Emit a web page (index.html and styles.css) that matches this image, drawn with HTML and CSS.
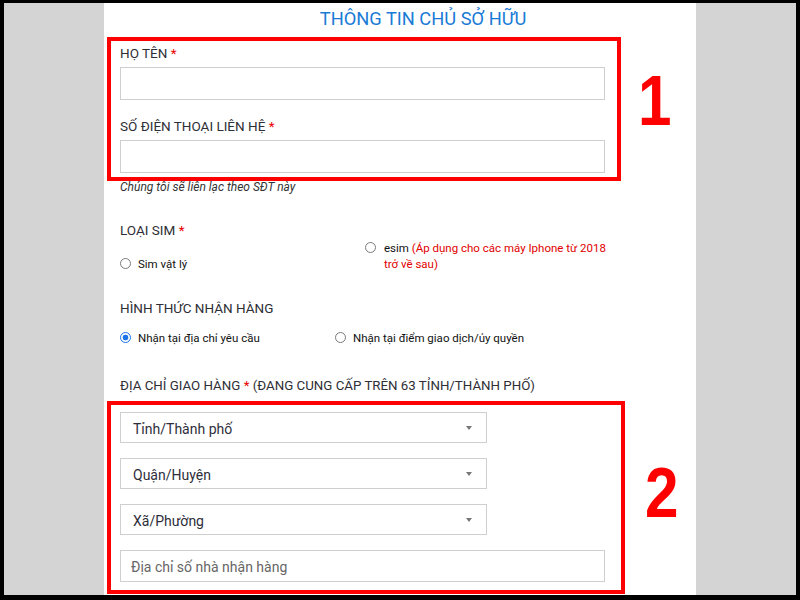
FILE: index.html
```html
<!DOCTYPE html>
<html lang="vi">
<head>
<meta charset="utf-8">
<title>Thông tin chủ sở hữu</title>
<link rel="stylesheet" href="styles.css">
</head>
<body>
<div class="screen">
  <div class="side"></div>
  <main class="panel">
    <h1 class="title">THÔNG TIN CHỦ SỞ HỮU</h1>

    <div class="box box-1">
      <div class="field">
        <div class="label">HỌ TÊN <span class="req">*</span></div>
        <input class="input" type="text">
      </div>
      <div class="field field-2">
        <div class="label">SỐ ĐIỆN THOẠI LIÊN HỆ <span class="req">*</span></div>
        <input class="input" type="text">
      </div>
    </div>
    <p class="hint pad">Chúng tôi sẽ liên lạc theo SĐT này</p>

    <div class="group group-sim pad">
      <div class="label">LOẠI SIM <span class="req">*</span></div>
      <div class="radios radios-sim">
        <div class="radio col-a"><span class="dot"></span><span class="rtext">Sim vật lý</span></div>
        <div class="radio col-b"><span class="dot"></span><p class="rtext">esim <span class="red">(Áp dụng cho các máy Iphone từ 2018 trở về sau)</span></p></div>
      </div>
    </div>

    <div class="group group-ship pad">
      <div class="label">HÌNH THỨC NHẬN HÀNG</div>
      <div class="radios radios-ship">
        <div class="radio col-c"><span class="dot on"></span><span class="rtext">Nhận tại địa chỉ yêu cầu</span></div>
        <div class="radio"><span class="dot"></span><span class="rtext">Nhận tại điểm giao dịch/ủy quyền</span></div>
      </div>
    </div>

    <div class="group group-addr pad">
      <div class="label label-addr">ĐỊA CHỈ GIAO HÀNG <span class="req">*</span> (ĐANG CUNG CẤP TRÊN 63 TỈNH/THÀNH PHỐ)</div>
    </div>

    <div class="box box-2">
      <div class="select"><span>Tỉnh/Thành phố</span><span class="caret"></span></div>
      <div class="select"><span>Quận/Huyện</span><span class="caret"></span></div>
      <div class="select"><span>Xã/Phường</span><span class="caret"></span></div>
      <input class="input input-addr" type="text" placeholder="Địa chỉ số nhà nhận hàng">
    </div>

    <span class="anno anno-1">1</span>
    <span class="anno anno-2">2</span>
  </main>
  <div class="side"></div>
</div>
</body>
</html>
```

FILE: styles.css
```css
* {
  box-sizing: border-box;
}

html,
body {
  margin: 0;
  padding: 0;
  background: #000;
}

body {
  font-family: Roboto, "Noto Sans", "Liberation Sans", sans-serif;
  color: #333;
}

.screen {
  width: 800px;
  height: 600px;
  border-style: solid;
  border-color: #000;
  border-width: 3px 4px 5px 4px;
  display: flex;
  overflow: hidden;
  background: #000;
}

.side {
  width: 100px;
  background: #d4d4d4;
}

.panel {
  position: relative;
  width: 592px;
  background: #fff;
  padding: 4px 0 0 3px;
  overflow: hidden;
}

.title {
  margin: 0;
  font-size: 18.3px;
  font-weight: 400;
  line-height: 24px;
  color: #1a7bd6;
  text-align: center;
  padding-left: 43px;
}

.pad {
  padding-left: 13px;
}

.box {
  border: 4px solid #f00;
}

.box-1 {
  width: 514px;
  margin-top: 6px;
  padding: 3px 12px 4px 9px;
}

.label {
  font-size: 13.5px;
  line-height: 18px;
  color: #2e2e36;
  white-space: nowrap;
}

.label-addr {
  font-size: 13.3px;
}

.req {
  color: #e60000;
}

.field .label {
  margin-bottom: 5px;
}

.field-2 {
  margin-top: 17px;
}

.input {
  display: block;
  width: 485px;
  height: 33px;
  margin: 0;
  border: 1px solid #cfcfcf;
  background: #fff;
  font-family: inherit;
  font-size: 14px;
  outline: none;
}

.hint {
  margin: -1px 0 0 0;
  font-size: 12px;
  line-height: 14px;
  font-style: italic;
  color: #333;
}

.group-sim {
  margin-top: 27px;
}

.radios {
  display: flex;
  align-items: flex-end;
}

.radios-sim {
  margin-top: 1px;
}

.radio {
  display: flex;
  align-items: flex-start;
  gap: 7px;
  font-size: 11.5px;
  line-height: 16px;
  color: #111;
}

.rtext {
  margin: 0;
}

.dot {
  flex: none;
  width: 11px;
  height: 11px;
  margin-top: 2px;
  border: 1px solid #7a7a7a;
  border-radius: 50%;
  background: #fff;
}

.dot.on {
  border: 1.5px solid #1a73e8;
  background: radial-gradient(circle, #1a73e8 0 2.6px, #fff 3.2px);
}

.col-a {
  width: 245px;
}

.col-b {
  width: 246px;
  gap: 8px;
}

.red {
  color: #e00000;
}

.group-ship {
  margin-top: 27px;
}

.radios-ship {
  margin-top: 13px;
}

.col-c {
  width: 215px;
}

.group-addr {
  margin-top: 31px;
}

.box-2 {
  width: 518px;
  margin-top: 6px;
  padding: 7px 16px 8px 9px;
}

.select {
  width: 367px;
  height: 31px;
  margin-bottom: 15px;
  padding: 3px 14px 0 12px;
  border: 1px solid #cfcfcf;
  display: flex;
  align-items: center;
  justify-content: space-between;
  font-size: 14px;
  color: #2e2e3a;
}

.caret {
  width: 0;
  height: 0;
  margin-top: -2px;
  border-left: 3px solid transparent;
  border-right: 3px solid transparent;
  border-top: 4px solid #777;
}

.input-addr {
  height: 32px;
  padding: 2px 0 0 10px;
  color: #333;
}

.input-addr::placeholder {
  color: #666;
  opacity: 1;
}

.anno {
  position: absolute;
  font-family: "Liberation Sans", Arial, sans-serif;
  font-weight: 700;
  font-size: 70px;
  line-height: 70px;
  color: #f00;
  transform: scaleX(0.86);
  transform-origin: left top;
}

.anno-1 {
  left: 534px;
  top: 63px;
}

.anno-2 {
  left: 541px;
  top: 455px;
}
```
